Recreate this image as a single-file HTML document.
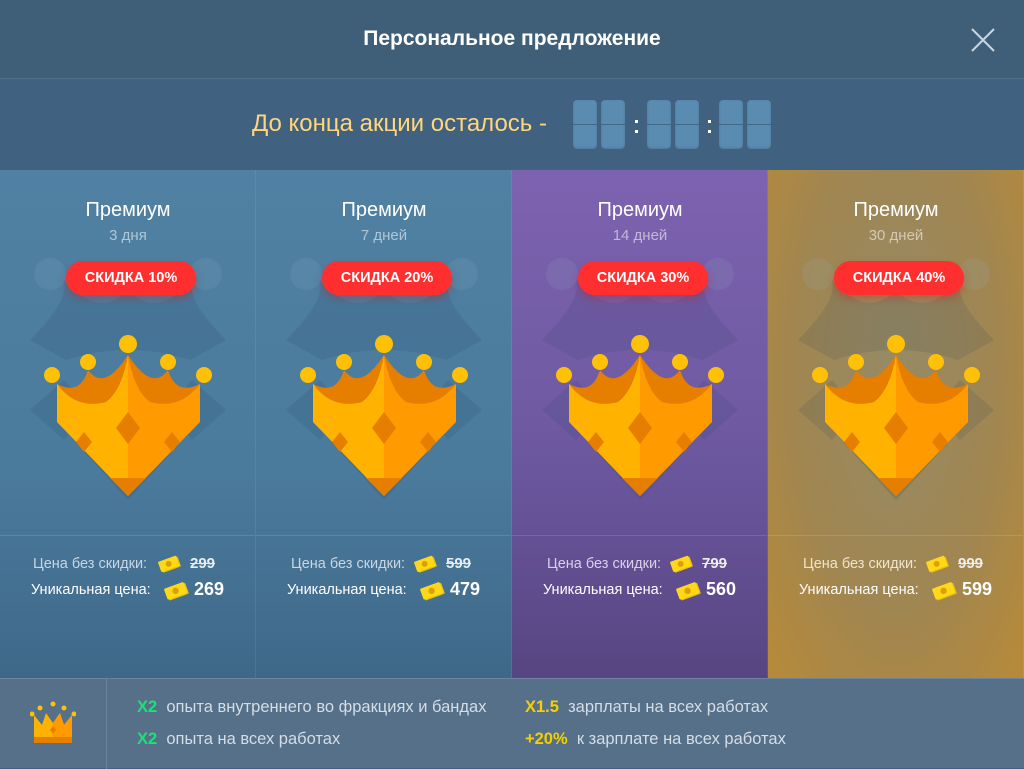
<!DOCTYPE html>
<html><head><meta charset="utf-8"><style>
*{margin:0;padding:0;box-sizing:border-box}
body{width:1024px;height:768px;overflow:hidden;font-family:"Liberation Sans","DejaVu Sans",sans-serif;background:#416180;position:relative}
.hdr{position:absolute;left:0;top:0;width:1024px;height:79px;background:#3f5f78;border-bottom:1px solid #4e6f89}
.hdr h1{position:absolute;left:0;width:1024px;top:27px;text-align:center;color:#fff;font-size:21px;font-weight:bold}
.x{position:absolute;left:971px;top:28px;width:24px;height:24px}
.tm{position:absolute;left:0;top:80px;width:1024px;height:90px;background:#416180}
.d{position:absolute;top:100px;width:24px;height:49px;border-radius:4px;background:#5a8bb0;box-shadow:inset 0 -1px 2px rgba(0,0,0,.15)}
.d:after{content:"";position:absolute;left:0;right:0;top:24px;height:1px;background:#3f6888}
.c{position:absolute;top:120px;width:3px;height:14px}
.c:before,.c:after{content:"";position:absolute;left:0;width:3px;height:3px;background:#fff}
.c:before{top:0}.c:after{top:10px}
.card{position:absolute;top:170px;width:256px;height:508px;overflow:hidden;border-right:1px solid rgba(255,255,255,.08)}
.b1{background:linear-gradient(180deg,#5081a3 0%,#4a7a9c 60%,#3f6888 100%)}
.b3{background:linear-gradient(180deg,#7d62b0 0%,#6f5aa2 50%,#574582 100%)}
.b4{background:radial-gradient(ellipse at 50% 40%,#968a66 0%,#a08651 55%,#b88a38 100%)}
.t1{position:absolute;top:29px;width:256px;text-align:center;color:#fff;font-size:20px}
.t2{position:absolute;top:57px;width:256px;text-align:center;color:rgba(255,255,255,.55);font-size:15px}
.pill{position:absolute;left:66px;top:91px;width:130px;height:34px;border-radius:17px;background:#ff2f2f;color:#fff;font-weight:bold;font-size:14.5px;text-align:center;line-height:34px;box-shadow:0 4px 8px rgba(200,30,30,.35)}
.cr{position:absolute;left:0;top:0}
.pr{position:absolute;font-size:14.5px}
.line{position:absolute;left:0;top:365px;width:256px;height:1px;background:rgba(255,255,255,.12)}
.bot{position:absolute;left:0;top:678px;width:1024px;height:90px;background:#567089;border-top:1px solid #6b849b}
.sep{position:absolute;left:106px;top:0;width:1px;height:90px;background:#6b849b}
.ft{position:absolute;font-size:16.5px;color:#d5dde5}
.g{color:#1ee07a;font-weight:bold}.y{color:#f5d000;font-weight:bold}
</style></head><body>
<svg width="0" height="0" style="position:absolute"><defs>
<symbol id="crown" viewBox="0 0 256 508">
<g opacity=".12" fill="#1e3c58">
<circle cx="50" cy="104" r="16" fill="#9ab8d0"/><circle cx="206" cy="104" r="16" fill="#9ab8d0"/>
<path d="M30,170 Q70,130 64,110 Q100,150 128,120 Q156,150 192,110 Q186,130 226,170 L190,190 Q128,170 66,190Z"/>
<path d="M30,240 L64,210 L90,240 L64,270Z M226,240 L192,210 L166,240 L192,270Z"/>
</g>
<path d="M64,220 L128,300 L192,220 L192,260 L128,330 L64,260Z" fill="#2e5070" opacity=".2"/>
<path d="M57,214 Q80,226 88,200 Q104,222 128,185 Q152,222 168,200 Q176,226 200,214 L200,240 L57,240Z" fill="#e67e00"/>
<path d="M57,214 L57,252 L128,326 L128,185 Q122,220 106,232 Q76,240 57,214Z" fill="#ffb300"/>
<path d="M200,214 L200,252 L128,326 L128,185 Q134,220 150,232 Q180,240 200,214Z" fill="#ff9a00"/>
<path d="M128,242 L140,258 L128,274 L116,258Z M84,262 L92,272 L84,282 L76,272Z M172,262 L180,272 L172,282 L164,272Z" fill="#e67e00"/>
<path d="M110,308 L146,308 L128,326Z" fill="#e67e00"/>
<circle cx="128" cy="174" r="9" fill="#ffc107"/>
<circle cx="88" cy="192" r="8" fill="#ffc107"/><circle cx="168" cy="192" r="8" fill="#ffc107"/>
<circle cx="52" cy="205" r="8" fill="#ffc107"/><circle cx="204" cy="205" r="8" fill="#ffc107"/>
</symbol>
<symbol id="bill" viewBox="0 0 20 14"><g transform="rotate(-20 10 7)"><rect x="2" y="3" width="16" height="9" rx="1" fill="#f0c000"/><rect x="1" y="2" width="16" height="9" rx="1" fill="#ffd81a"/><circle cx="9" cy="6.5" r="2.5" fill="#e0a000"/></g></symbol>
</defs></svg>

<div class="hdr"><h1>Персональное предложение</h1>
<svg class="x" viewBox="0 0 24 24"><path d="M1,1 L23,23 M23,1 L1,23" stroke="#c9d5e0" stroke-width="2"/></svg></div>
<div class="tm"></div>
<div style="position:absolute;left:252px;top:110px;color:#ffd67a;font-size:24px">До конца акции осталось -</div>
<div class="d" style="left:573px"></div><div class="d" style="left:601px"></div><div class="c" style="left:635px"></div>
<div class="d" style="left:647px"></div><div class="d" style="left:675px"></div><div class="c" style="left:708px"></div>
<div class="d" style="left:719px"></div><div class="d" style="left:747px"></div>

<div class="card b1" style="left:0">
<svg class="cr" width="256" height="508"><use href="#crown"/></svg>
<div class="t1">Премиум</div><div class="t2">3 дня</div><div class="pill">СКИДКА 10%</div>
<div class="line"></div>
<div class="pr" style="left:33px;top:386px;color:#c8d6e2">Цена без скидки:</div>
<svg style="position:absolute;left:158px;top:385px" width="24" height="18"><use href="#bill"/></svg>
<div class="pr" style="left:190px;top:385px;color:#e6eef4;font-weight:bold;font-size:15px;text-decoration:line-through">299</div>
<div class="pr" style="left:31px;top:412px;color:#fff">Уникальная цена:</div>
<svg style="position:absolute;left:164px;top:411px" width="26" height="20"><use href="#bill"/></svg>
<div class="pr" style="left:194px;top:409px;color:#fff;font-weight:bold;font-size:18px">269</div>
</div>

<div class="card b1" style="left:256px">
<svg class="cr" width="256" height="508"><use href="#crown"/></svg>
<div class="t1">Премиум</div><div class="t2">7 дней</div><div class="pill">СКИДКА 20%</div>
<div class="line"></div>
<div class="pr" style="left:35px;top:386px;color:#c8d6e2">Цена без скидки:</div>
<svg style="position:absolute;left:158px;top:385px" width="24" height="18"><use href="#bill"/></svg>
<div class="pr" style="left:190px;top:385px;color:#e6eef4;font-weight:bold;font-size:15px;text-decoration:line-through">599</div>
<div class="pr" style="left:31px;top:412px;color:#fff">Уникальная цена:</div>
<svg style="position:absolute;left:164px;top:411px" width="26" height="20"><use href="#bill"/></svg>
<div class="pr" style="left:194px;top:409px;color:#fff;font-weight:bold;font-size:18px">479</div>
</div>

<div class="card b3" style="left:512px">
<svg class="cr" width="256" height="508"><use href="#crown"/></svg>
<div class="t1">Премиум</div><div class="t2">14 дней</div><div class="pill">СКИДКА 30%</div>
<div class="line"></div>
<div class="pr" style="left:35px;top:386px;color:#d8d0ea">Цена без скидки:</div>
<svg style="position:absolute;left:158px;top:385px" width="24" height="18"><use href="#bill"/></svg>
<div class="pr" style="left:190px;top:385px;color:#eee;font-weight:bold;font-size:15px;text-decoration:line-through">799</div>
<div class="pr" style="left:31px;top:412px;color:#fff">Уникальная цена:</div>
<svg style="position:absolute;left:164px;top:411px" width="26" height="20"><use href="#bill"/></svg>
<div class="pr" style="left:194px;top:409px;color:#fff;font-weight:bold;font-size:18px">560</div>
</div>

<div class="card b4" style="left:768px">
<svg class="cr" width="256" height="508"><use href="#crown"/></svg>
<div class="t1">Премиум</div><div class="t2">30 дней</div><div class="pill">СКИДКА 40%</div>
<div class="line"></div>
<div class="pr" style="left:35px;top:386px;color:#eee4cc">Цена без скидки:</div>
<svg style="position:absolute;left:158px;top:385px" width="24" height="18"><use href="#bill"/></svg>
<div class="pr" style="left:190px;top:385px;color:#eee;font-weight:bold;font-size:15px;text-decoration:line-through">999</div>
<div class="pr" style="left:31px;top:412px;color:#fff">Уникальная цена:</div>
<svg style="position:absolute;left:164px;top:411px" width="26" height="20"><use href="#bill"/></svg>
<div class="pr" style="left:194px;top:409px;color:#fff;font-weight:bold;font-size:18px">599</div>
</div>

<div class="bot">
<svg style="position:absolute;left:30px;top:22px" width="46" height="46" viewBox="0 0 46 46">
<rect x="4" y="36" width="38" height="6" fill="#e67e00"/>
<path d="M4,14 L12,24 L16,12 L23,22 L30,12 L34,24 L42,14 L42,36 L4,36Z" fill="#ffb300"/>
<path d="M23,22 L30,12 L34,24 L42,14 L42,36 L23,36Z" fill="#ff9a00"/>
<circle cx="2" cy="13" r="2.5" fill="#ffc107"/><circle cx="10" cy="7" r="2.5" fill="#ffc107"/><circle cx="23" cy="3" r="2.5" fill="#ffc107"/><circle cx="34" cy="7" r="2.5" fill="#ffc107"/><circle cx="44" cy="13" r="2.5" fill="#ffc107"/>
<path d="M23,25 L26,29 L23,33 L20,29Z" fill="#e67e00"/>
</svg>
<div class="sep"></div>
<div class="ft" style="left:137px;top:19px"><span class="g">X2</span>&nbsp; опыта внутреннего во фракциях и бандах</div>
<div class="ft" style="left:137px;top:51px"><span class="g">X2</span>&nbsp; опыта на всех работах</div>
<div class="ft" style="left:525px;top:19px"><span class="y">X1.5</span>&nbsp; зарплаты на всех работах</div>
<div class="ft" style="left:525px;top:51px"><span class="y">+20%</span>&nbsp; к зарплате на всех работах</div>
</div>
</body></html>
